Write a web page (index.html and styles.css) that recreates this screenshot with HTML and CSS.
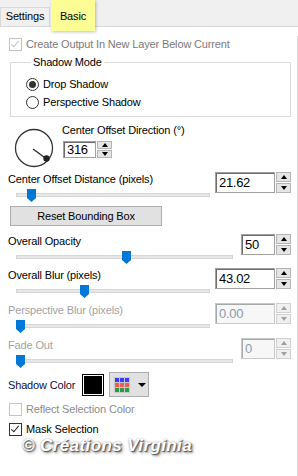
FILE: index.html
```html
<!DOCTYPE html>
<html lang="en">
<head>
    <meta charset="UTF-8">
    <title>Shadow</title>
    <link rel="stylesheet" href="styles.css">
</head>
<body>
<div class="tabs">
    <div class="tab">Settings</div>
    <div class="tab tab-active">Basic</div>
</div>
<div class="panel">
    <div class="check-row disabled">
        <span class="box box-checked"></span>Create Output In New Layer Below Current
    </div>

    <fieldset class="group">
        <legend>Shadow Mode</legend>
        <div class="radio-row"><span class="radio radio-on"></span>Drop Shadow</div>
        <div class="radio-row"><span class="radio"></span>Perspective Shadow</div>
    </fieldset>

    <div class="dir-row">
        <svg class="dial" width="60" height="50" viewBox="0 0 60 50">
            <circle cx="34" cy="28" r="18.5" fill="none" stroke="#333" stroke-width="1.3"/>
            <line x1="33" y1="29" x2="46" y2="38.5" stroke="#333" stroke-width="1.5"/>
            <circle cx="46.5" cy="38.5" r="3.2" fill="#222"/>
        </svg>
        <div class="dir-col">
            <div class="label">Center Offset Direction (°)</div>
            <div class="spin spin-small">
                <div class="spin-field">316</div>
                <div class="spin-btns"><span class="up"></span><span class="down"></span></div>
            </div>
        </div>
    </div>

    <div class="slider-block">
        <div class="slider-col narrow">
            <div class="label">Center Offset Distance (pixels)</div>
            <div class="slider"><div class="track"></div><div class="thumb" style="left: 11px"></div></div>
        </div>
        <div class="spin">
            <div class="spin-field wide-field">21.62</div>
            <div class="spin-btns"><span class="up"></span><span class="down"></span></div>
        </div>
    </div>

    <div class="button">Reset Bounding Box</div>

    <div class="slider-block block-opacity">
        <div class="slider-col wide">
            <div class="label">Overall Opacity</div>
            <div class="slider"><div class="track"></div><div class="thumb" style="left: 106px"></div></div>
        </div>
        <div class="spin">
            <div class="spin-field">50</div>
            <div class="spin-btns"><span class="up"></span><span class="down"></span></div>
        </div>
    </div>

    <div class="slider-block">
        <div class="slider-col narrow">
            <div class="label">Overall Blur (pixels)</div>
            <div class="slider"><div class="track"></div><div class="thumb" style="left: 64px"></div></div>
        </div>
        <div class="spin">
            <div class="spin-field wide-field">43.02</div>
            <div class="spin-btns"><span class="up"></span><span class="down"></span></div>
        </div>
    </div>

    <div class="slider-block disabled">
        <div class="slider-col narrow">
            <div class="label">Perspective Blur (pixels)</div>
            <div class="slider"><div class="track"></div><div class="thumb" style="left: 0"></div></div>
        </div>
        <div class="spin">
            <div class="spin-field wide-field">0.00</div>
            <div class="spin-btns"><span class="up"></span><span class="down"></span></div>
        </div>
    </div>

    <div class="slider-block disabled">
        <div class="slider-col wide">
            <div class="label">Fade Out</div>
            <div class="slider"><div class="track"></div><div class="thumb" style="left: 0"></div></div>
        </div>
        <div class="spin">
            <div class="spin-field">0</div>
            <div class="spin-btns"><span class="up"></span><span class="down"></span></div>
        </div>
    </div>

    <div class="color-row">
        <span class="color-label">Shadow Color</span>
        <span class="swatch"></span>
        <span class="palette">
            <span class="palette-grid">
                <i class="c-blue"></i><i class="c-blue"></i><i class="c-blue"></i>
                <i class="c-red"></i><i class="c-red"></i><i class="c-red"></i>
                <i class="c-green"></i><i class="c-green"></i><i class="c-green"></i>
            </span>
            <span class="caret"></span>
        </span>
    </div>

    <div class="check-row disabled faint">
        <span class="box"></span>Reflect Selection Color
    </div>
    <div class="check-row">
        <span class="box box-checked"></span>Mask Selection
    </div>

    <div class="watermark">© Créations Virginia</div>
</div>
</body>
</html>
```

FILE: styles.css
```css
body {
    margin: 0;
    width: 298px;
    height: 476px;
    overflow: hidden;
    background: #fff;
    font-family: "Liberation Sans", Arial, sans-serif;
    font-size: 11px;
    letter-spacing: -0.15px;
    color: #000;
}

.tabs {
    height: 26px;
    background: #f0f0f0;
    border-bottom: 1px solid #d9d9d9;
    display: flex;
    align-items: flex-end;
}

.tab {
    height: 18px;
    width: 48px;
    line-height: 17px;
    text-align: center;
    border: 1px solid #d9d9d9;
    border-bottom: none;
    background: #f0f0f0;
}

.tab-active {
    position: relative;
    z-index: 2;
    width: 44px;
    height: 31px;
    line-height: 32px;
    margin-left: 1px;
    margin-bottom: -5px;
    border: none;
    background: #fdfd96;
    box-shadow: 1px 1px 3px rgba(0, 0, 0, 0.25);
}

.panel {
    height: 449px;
    border-right: 1px solid #d9d9d9;
}

/* checkboxes */
.check-row {
    display: flex;
    align-items: center;
    height: 16px;
    padding-left: 9px;
}

.panel > .check-row:first-child {
    margin-top: 9px;
}

.box {
    width: 11px;
    height: 11px;
    border: 1px solid #333;
    margin-right: 4px;
    position: relative;
    background: #fff;
}

.box-checked::after {
    content: "";
    position: absolute;
    left: 3px;
    top: 0;
    width: 3px;
    height: 7px;
    border: solid #222;
    border-width: 0 1.5px 1.5px 0;
    transform: rotate(40deg);
}

.disabled {
    color: #a3a3a3;
}

.check-row.disabled {
    color: #7a7a7a;
}

.check-row.faint {
    color: #8c8c8c;
}

.disabled .box {
    border-color: #c4c4c4;
}

.disabled .box-checked::after {
    border-color: #c4c4c4;
}

/* group */
.group {
    margin: 3px 6px 0 10px;
    padding: 6px 0 5px 15px;
    border: 1px solid #dcdcdc;
}

.group legend {
    padding: 0 2px;
    margin-left: 5px;
    line-height: 14px;
}

.radio-row {
    display: flex;
    align-items: center;
    height: 18px;
}

.radio {
    width: 11px;
    height: 11px;
    border: 1px solid #333;
    border-radius: 50%;
    margin-right: 4px;
    display: flex;
    align-items: center;
    justify-content: center;
}

.radio-on::after {
    content: "";
    width: 7px;
    height: 7px;
    border-radius: 50%;
    background: #333;
}

/* direction */
.dir-row {
    display: flex;
    height: 50px;
    margin-top: 3px;
}

.dir-col {
    margin-left: 2px;
    padding-top: 3px;
}

.dir-col .label {
    padding-left: 0;
}

.label {
    height: 14px;
    line-height: 14px;
    padding-left: 8px;
}

/* spin boxes */
.spin {
    display: flex;
    height: 21px;
    margin-left: auto;
    margin-right: 6px;
}

.spin-small {
    height: 17px;
    margin: 4px 0 0 1px;
}

.spin-field {
    width: 29px;
    border: 1px solid #a0a0a0;
    box-shadow: inset 1px 1px 0 #6d6d6d;
    padding-left: 3px;
    font-size: 13px;
    letter-spacing: -0.3px;
    line-height: 19px;
    background: #fff;
}

.spin-small .spin-field {
    width: 28px;
    line-height: 15px;
}

.wide-field {
    width: 55px;
}

.spin-btns {
    display: flex;
    flex-direction: column;
    gap: 1px;
    width: 15px;
    margin-left: 1px;
}

.spin-btns span {
    flex: 1;
    background: #e5e5e5;
    border: 1px solid #b5b5b5;
    display: flex;
    align-items: center;
    justify-content: center;
}

.spin-btns .up::after {
    content: "";
    border: 3px solid transparent;
    border-bottom: 4px solid #000;
    border-top: none;
}

.spin-btns .down::after {
    content: "";
    border: 3px solid transparent;
    border-top: 4px solid #000;
    border-bottom: none;
}

.disabled .spin-field {
    color: #8a9bb0;
    border-color: #c8c8c8;
    box-shadow: inset 1px 1px 0 #a8a8a8;
    background: #f7f7f7;
}

.disabled .spin-btns span {
    background: #f0f0f0;
    border-color: #d0d0d0;
}

.disabled .spin-btns .up::after {
    border-bottom-color: #a0a0a0;
}

.disabled .spin-btns .down::after {
    border-top-color: #a0a0a0;
}

/* sliders */
.slider-block {
    display: flex;
    height: 30px;
    margin-bottom: 5px;
}

.slider-col.narrow {
    width: 210px;
}

.slider-col.wide {
    width: 233px;
}

.slider {
    position: relative;
    height: 16px;
    margin-left: 16px;
}

.track {
    position: absolute;
    left: 0;
    right: 0;
    top: 7px;
    height: 2px;
    background: #e7e7e7;
    border: 1px solid #d6d6d6;
}

.thumb {
    position: absolute;
    top: 3px;
    width: 9px;
    height: 13px;
    background: #0078d7;
    clip-path: polygon(0 0, 100% 0, 100% 70%, 50% 100%, 0 70%);
}

.dir-row + .slider-block {
    margin-top: 2px;
    margin-bottom: 4px;
}

.button {
    width: 150px;
    height: 18px;
    margin-left: 10px;
    line-height: 18px;
    text-align: center;
    background: #e1e1e1;
    border: 1px solid #adadad;
}

.block-opacity {
    margin-top: 8px;
    margin-bottom: 4px;
}

/* colour */
.color-row {
    display: flex;
    align-items: center;
    height: 25px;
    margin-top: -1px;
    padding-left: 8px;
    color: #111133;
}

.color-label {
    width: 74px;
}

.swatch {
    width: 20px;
    height: 20px;
    background: #000;
    border: 1px solid #000;
    box-shadow: inset 0 0 0 1px #fff;
}

.palette {
    display: flex;
    align-items: center;
    width: 38px;
    height: 23px;
    margin-left: 5px;
    background: #e1e1e1;
    border: 1px solid #adadad;
}

.palette-grid {
    display: grid;
    grid-template-columns: repeat(3, 4px);
    grid-template-rows: repeat(3, 4px);
    gap: 1px;
    padding: 1px;
    margin-left: 4px;
    background: #c8c8c8;
}

.palette-grid i {
    display: block;
}

.c-blue { background: #3b3bff; }
.c-red { background: #f25a5a; }
.c-green { background: #2f9a3f; }

.caret {
    margin-left: 8px;
    border: 4px solid transparent;
    border-top: 4px solid #000;
    border-bottom: none;
}

.color-row + .check-row {
    margin-top: 4px;
}

.check-row + .check-row {
    margin-top: 4px;
}

.watermark {
    margin: -1px 0 0 22px;
    line-height: 20px;
    font-size: 17px;
    font-weight: bold;
    font-style: italic;
    letter-spacing: 0.4px;
    color: #fff;
    text-shadow: 1px 1px 1px #555, 2px 2px 3px #888, 0 0 2px #999;
}
```
